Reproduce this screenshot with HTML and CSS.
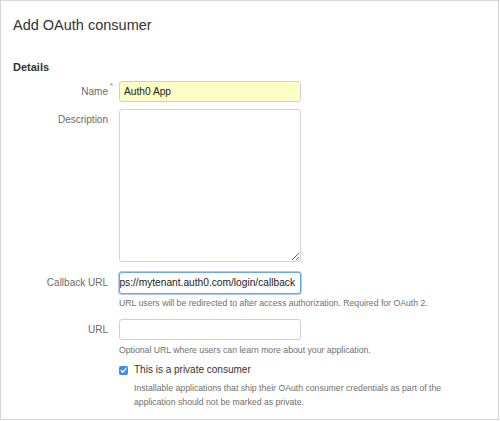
FILE: index.html
```html
<!DOCTYPE html>
<html>
<head>
<meta charset="utf-8">
<link rel="stylesheet" href="styles.css">
</head>
<body>
<div class="panel">
  <h1 class="title">Add OAuth consumer</h1>
  <h2 class="section">Details</h2>
  <div class="form">
    <div class="label">Name<span class="req">*</span></div>
    <div class="field"><div class="input input-yellow">Auth0 App</div></div>

    <div class="label">Description</div>
    <div class="field"><textarea class="textarea"></textarea></div>

    <div class="label label-callback">Callback URL</div>
    <div class="field field-callback">
      <div class="input input-focus"><span class="scroll-text">https://mytenant.auth0.com/login/callback</span></div>
      <div class="help">URL users will be redirected to after access authorization. Required for OAuth 2.</div>
    </div>

    <div class="label label-url">URL</div>
    <div class="field field-url">
      <div class="input"></div>
      <div class="help help-optional">Optional URL where users can learn more about your application.</div>
    </div>

    <div class="label"></div>
    <div class="field field-check">
      <div class="check-row">
        <svg class="checkbox" width="9" height="9" viewBox="0 0 9 9"><rect x="0" y="0" width="9" height="9" rx="2" fill="#3d8cf0"/><path d="M2.2 4.6 L3.8 6.2 L6.9 2.6" fill="none" stroke="#fff" stroke-width="1.4" stroke-linecap="round" stroke-linejoin="round"/></svg>
        <span class="check-label">This is a private consumer</span>
      </div>
      <div class="help help-check">Installable applications that ship their OAuth consumer credentials as part of the application should not be marked as private.</div>
    </div>
  </div>
</div>
</body>
</html>
```

FILE: styles.css
```css
* { box-sizing: border-box; }
html, body { margin: 0; padding: 0; background: #fff; }
body { font-family: "Liberation Sans", Arial, sans-serif; color: #333; }

.panel {
  width: 499px;
  height: 420px;
  border: 1px solid #d4d4d4;
  background: #fff;
  overflow: hidden;
}

.title {
  margin: 16px 0 0 12px;
  font-size: 14.5px;
  line-height: 17px;
  font-weight: normal;
  color: #333;
}

.section {
  margin: 27px 0 0 12px;
  font-size: 11px;
  line-height: 13px;
  font-weight: bold;
  color: #333;
}

.form {
  display: grid;
  grid-template-columns: 107px 1fr;
  column-gap: 11px;
  margin-top: 7px;
}

.label {
  text-align: right;
  font-size: 10px;
  line-height: 12px;
  color: #6b6b6b;
  padding-top: 5px;
  position: relative;
}
.req {
  position: absolute;
  right: -5px;
  top: 1px;
  color: #e0463c;
  font-size: 8px;
  line-height: 8px;
}

.field { margin-bottom: 7px; }

.input {
  width: 182px;
  height: 21px;
  border: 1px solid #cfcfcf;
  border-radius: 3px;
  background: #fff;
  font-size: 10.2px;
  line-height: 19px;
  padding: 0 4px;
  color: #222;
  white-space: nowrap;
  overflow: hidden;
}
.input-yellow { background: #fdfdc6; }

.input-focus {
  height: 22px;
  border: 1px solid #6ba6e6;
  box-shadow: 0 0 0 1px #a9cbf1;
  display: flex;
  justify-content: flex-end;
  line-height: 20px;
  padding-right: 5px;
}
.scroll-text { flex: none; }

.textarea {
  display: block;
  width: 182px;
  height: 153px;
  margin: 0;
  border: 1px solid #d4d4d4;
  border-radius: 3px;
  resize: both;
  background: #fff;
}

.field-callback { margin-top: 3px; margin-bottom: 0; }
.label-callback { padding-top: 5px; margin-top: 3px; }

.help {
  font-size: 8.7px;
  line-height: 13px;
  color: #707070;
  margin-top: 3px;
  white-space: nowrap;
}

.field-url { margin-top: 9px; margin-bottom: 0; }
.label-url { margin-top: 9px; }
.help-optional { margin-top: 4px; }

.field-check { margin-top: 6px; }
.check-row {
  display: flex;
  align-items: center;
  height: 14px;
}
.checkbox { flex: none; margin-right: 6px; }
.check-label {
  font-size: 10px;
  line-height: 14px;
  color: #333;
}
.help-check {
  margin-top: 5px;
  padding-left: 15px;
  line-height: 13.7px;
  width: 330px;
  white-space: normal;
}
```
